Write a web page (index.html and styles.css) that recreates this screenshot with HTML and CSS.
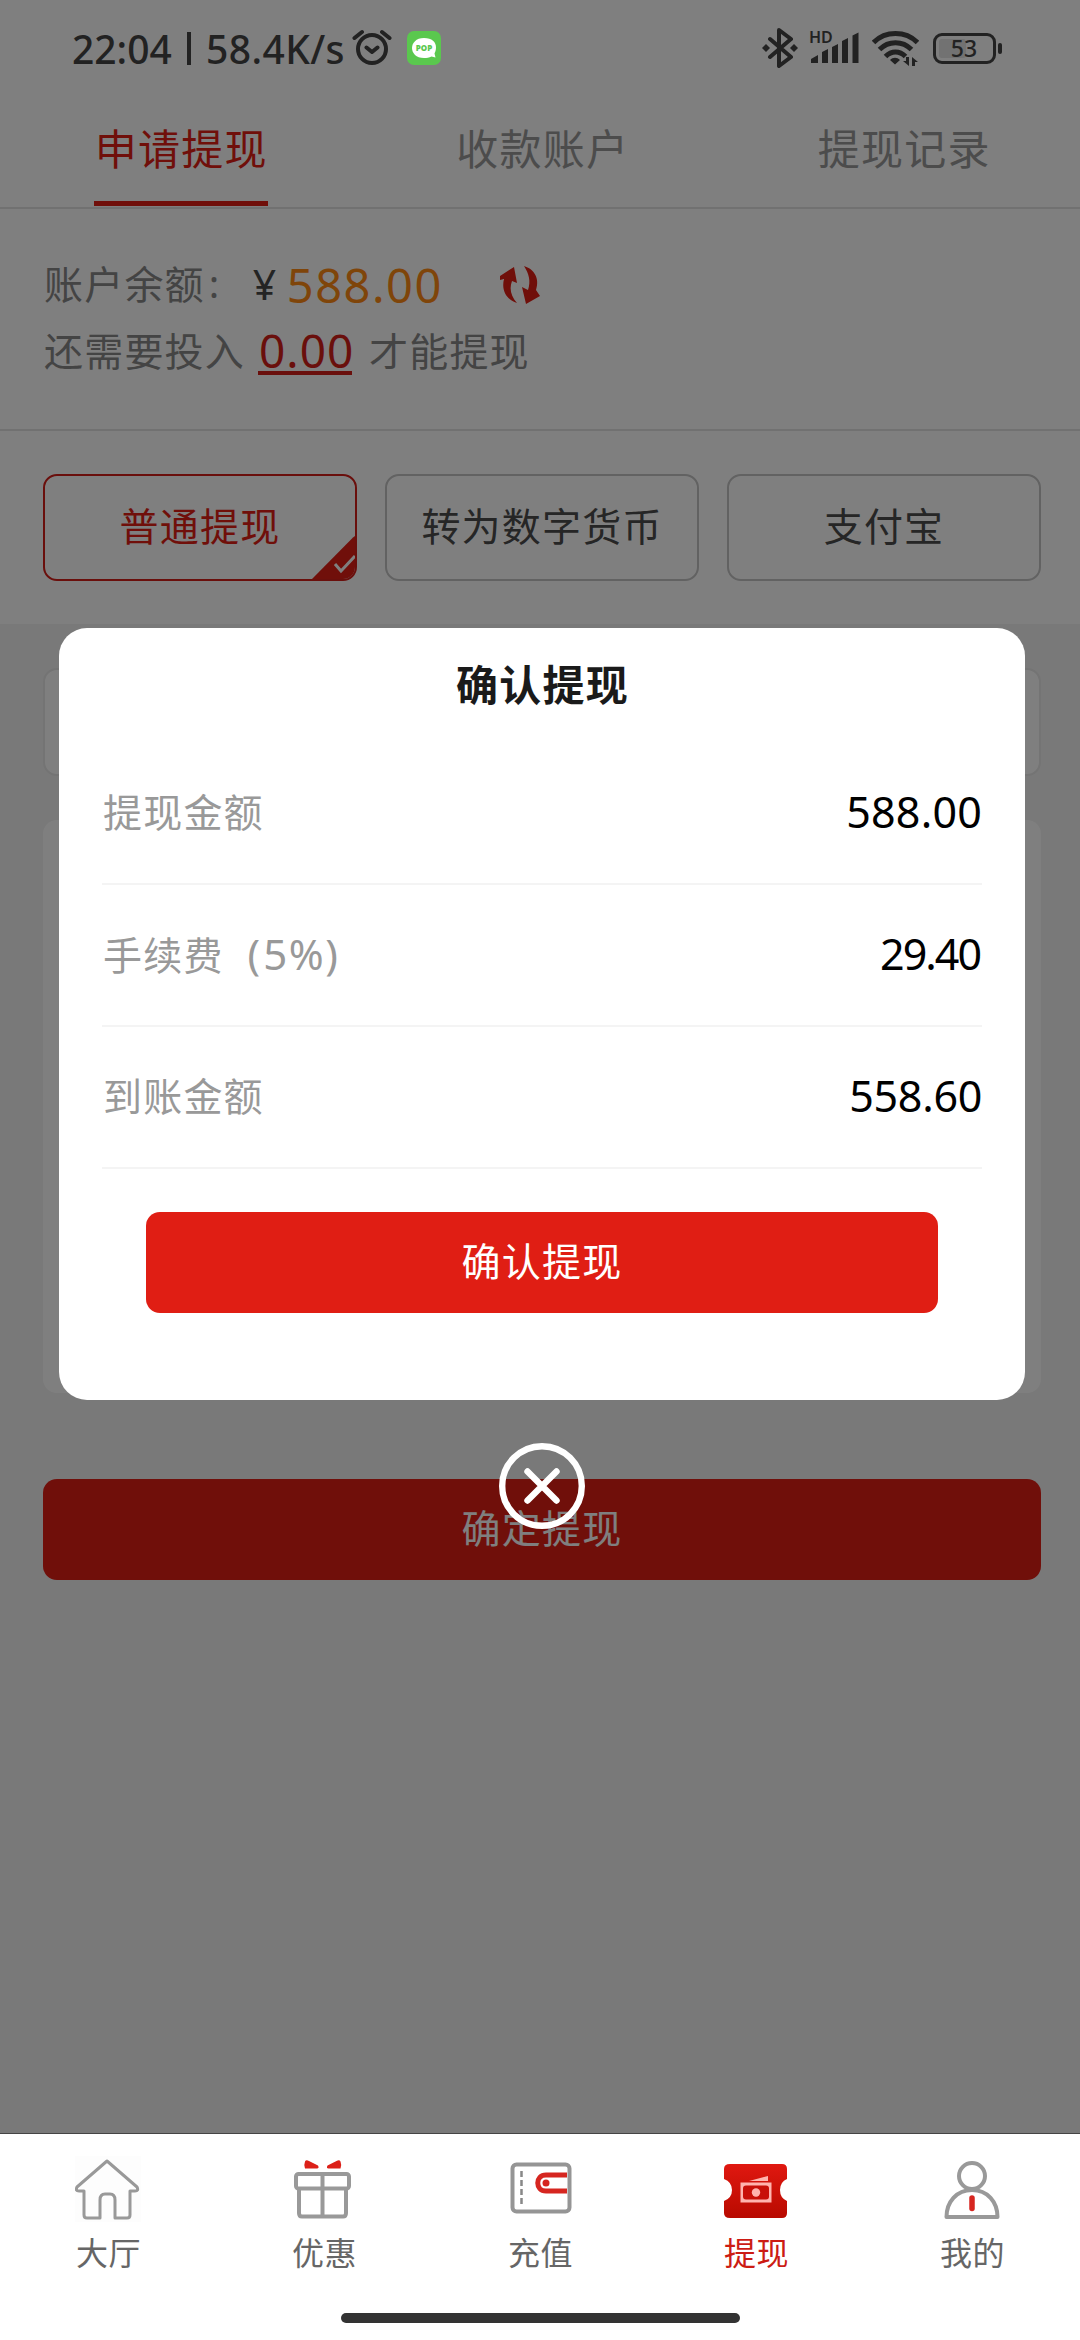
FILE: index.html
```html
<!DOCTYPE html>
<html lang="zh-CN">
<head>
<meta charset="utf-8">
<title>申请提现</title>
<link rel="stylesheet" href="styles.css">
</head>
<body>
<div class="app">
  <main class="page">
    <nav class="tabs">
      <div class="tab active"><span>申请提现</span></div>
      <div class="tab"><span>收款账户</span></div>
      <div class="tab"><span>提现记录</span></div>
    </nav>
    <section class="balance">
      <div class="line"><span class="label">账户余额</span><span class="colon">:</span><span class="yen">¥</span><span class="amount">588.00</span>
        <svg class="refresh" width="40" height="38" viewBox="0 0 40 38"><path d="M0 10 14 1l3 16-5-2c-3 8-1 15 5 22C7 34 1 25 4 13l-4 1z"/><path d="M24 0c10 3 16 12 12 24l4 6-14 8-4-17 6 3c3-9 1-16-4-24z"/></svg>
      </div>
      <div class="line"><span class="label">还需要投入</span><span class="need">0.00</span><span class="label">才能提现</span></div>
    </section>
    <section class="methods">
      <div class="method selected">普通提现
        <svg class="corner" width="43" height="43" viewBox="0 0 43 43"><path class="tri" d="M0 43 41 1.500 43 0v31a12 12 0 0 1-12 12z"/><path class="tick" d="m23 28 6 7 14-15"/></svg>
      </div>
      <div class="method">转为数字货币</div>
      <div class="method">支付宝</div>
    </section>
    <section class="form">
      <div class="field"></div>
      <div class="card"></div>
      <div class="submit">确定提现</div>
    </section>
  </main>

  <div class="overlay"></div>

  <header class="status">
    <span class="clock">22:04</span><span class="bar"></span><span class="speed">58.4K/s</span>
    <svg class="alarm" width="40" height="38" viewBox="0 0 40 38"><g fill="none" stroke="#222" stroke-linecap="round" stroke-linejoin="round"><circle cx="20" cy="20" r="14" stroke-width="4"/><path stroke-width="4" d="M14.500 18.500 20 23l5.500-4.500M2.500 9l7.500-6M37.500 9 30 3"/></g></svg>
    <svg class="pop" width="34" height="34" viewBox="0 0 34 34"><rect width="34" height="34" rx="7" fill="#5ac84e"/><path fill="#fff" d="M17 7c8 0 12 4 12 9.500 0 3-1 5-1.500 6l1 4-4-1C22 27 20 27 17 27 9 27 5 22 5 17S9 7 17 7z"/><text x="17" y="20" text-anchor="middle">POP</text></svg>
    <span class="spacer"></span>
    <svg class="bt" width="36" height="40" viewBox="0 0 36 40"><path fill="none" stroke="#222" stroke-width="4" stroke-linejoin="round" stroke-linecap="round" d="M8 11l21 18-12 9V2l12 9L8 29"/><path fill="#222" d="m0 20 4-4 4 4-4 4zM28 20l4-4 4 4-4 4z"/></svg>
    <svg class="signal" width="50" height="34" viewBox="0 0 50 34"><text x="0" y="12">HD</text><path fill="#222" d="M2 32v-4l7-4v8zM13 32V21l6-3v14zM23 32V16l6-3v19zM33 32V10l6-3v25zM43.500 32V4.500l6-3V32z"/></svg>
    <svg class="wifi" width="47" height="35" viewBox="0 0 47 35"><g fill="none" stroke="#222" stroke-width="5"><path d="M1.500 11.500c12-12 32-12 44 0M7.500 18.500c9-9 23-9 32 0M13.500 25.500c6-6 14-6 20 0"/></g><path fill="#222" d="M18 29c3-3 7-3 10 0l-5 4.500zM34 26h3v9l-6-5h3zM40 35v-9l6 5h-3v4z"/></svg>
    <svg class="battery" width="69" height="31" viewBox="0 0 69 31"><rect x="6" y="6" width="27" height="19" rx="3" fill="#727272"/><rect x="1.500" y="1.500" width="60" height="28" rx="7.500" fill="none" stroke="#222" stroke-width="3"/><rect x="65" y="10" width="4" height="11" rx="2" fill="#222"/><text x="31" y="24" text-anchor="middle">53</text></svg>
  </header>

  <div class="dialog">
    <h2>确认提现</h2>
    <div class="row"><span>提现金额</span><b>588.00</b></div>
    <div class="row"><span>手续费<i class="paren">(</i><i class="pct">5%)</i></span><b class="fee">29.40</b></div>
    <div class="row"><span>到账金额</span><b class="net">558.60</b></div>
    <div class="confirm">确认提现</div>
  </div>
  <svg class="close" width="86" height="86" viewBox="0 0 86 86"><g fill="none" stroke="#fff"><circle cx="43" cy="43" r="39.800" stroke-width="6.400"/><path stroke-width="6.400" stroke-linecap="round" d="m28.500 28.500 29 29m0-29-29 29"/></g></svg>

  <footer class="nav">
    <div class="items">
      <div class="item">
        <svg width="66" height="66" viewBox="0 0 66 66"><rect width="66" height="66" fill="#fdfdfd"/><path fill="none" stroke="#999" stroke-width="3" stroke-linejoin="round" d="M32 5 62 31q2 4-2 4h-5v24q0 3-3 3H40V44q0-6-5-6h-5q-5 0-5 6v18H12q-3 0-3-3V35H4q-4 0-2-4z"/></svg>
        <span>大厅</span>
      </div>
      <div class="item">
        <svg width="66" height="66" viewBox="0 0 66 66"><path fill="#dc2018" d="M14 5.500q1-2 4-.500l9 4.500q1.500 3-1 3H14q-1.500-3 0-7zM49.500 5.500q-1-2-4-.500l-9 4.500q-1.500 3 1 3h12q1.500-3 0-7z"/><g fill="none" stroke="#999" stroke-width="4"><rect x="5" y="18" width="53" height="14.500" rx="2.500"/><path d="M8 33v24q0 3.500 3 3.500h41q3 0 3-3.500V33M31.500 18v42"/></g></svg>
        <span>优惠</span>
      </div>
      <div class="item">
        <svg width="66" height="66" viewBox="0 0 66 66"><rect x="5.500" y="8.500" width="57" height="47" rx="4" fill="none" stroke="#959595" stroke-width="4"/><path stroke="#888" stroke-width="2.500" stroke-dasharray="6 3" d="M14.500 15v34"/><path fill="none" stroke="#d62620" stroke-width="5" d="M60 19H39c-11 0-11 16 0 16h21"/><circle cx="39" cy="27" r="3.500" fill="#d62620"/></svg>
        <span>充值</span>
      </div>
      <div class="item on">
        <svg width="66" height="66" viewBox="0 0 66 66"><defs><linearGradient id="g" x2="0" y2="1"><stop stop-color="#e01810"/><stop offset="1" stop-color="#b80a00"/></linearGradient></defs><path fill="url(#g)" d="M7 8h52q5 0 5 5v10q-7 3-7 11t7 11v12q0 5-5 5H7q-6 0-6-5V45q8-3 8-11T1 23V13q0-5 6-5z"/><path fill="#ffb4ae" d="m26 25 19-5v5zM17.500 26.500h31v20h-31z"/><rect x="20" y="29.500" width="26" height="14" rx="3" fill="#c81008"/><circle cx="33" cy="36.500" r="4.200" fill="#ffb4ae"/></svg>
        <span>提现</span>
      </div>
      <div class="item">
        <svg width="66" height="66" viewBox="0 0 66 66"><g fill="none" stroke="#999" stroke-width="4"><circle cx="33" cy="20" r="13"/><path stroke-linejoin="round" d="M7.500 61c0-15 10-27 25.500-27s25.500 12 25.500 27z"/></g><path stroke="#d62620" stroke-width="5.500" stroke-linecap="round" d="M33 42v10.500"/></svg>
        <span>我的</span>
      </div>
    </div>
    <div class="homebar"></div>
  </footer>
</div>
</body>
</html>
```
FILE: styles.css
```css
* { box-sizing: border-box; }
body {
  margin: 0;
  font-family: "Noto Sans", "Noto Sans CJK SC", sans-serif;
  background: #fff;
}
.app {
  position: relative;
  display: flex;
  flex-direction: column;
  width: 1080px;
  height: 2340px;
  overflow: hidden;
}
.page {
  flex: 1;
  display: flex;
  flex-direction: column;
  padding-top: 96px;
  background: #fff;
}

/* Top tabs */
.tabs {
  display: flex;
  height: 113px;
  border-bottom: 2px solid #e2e2e2;
}
.tab {
  flex: 0 0 361.5px;
  display: flex;
  justify-content: center;
  font-size: 42px;
  letter-spacing: 1.2px;
  line-height: 105px;
  color: #999;
}
.tab span { height: 110px; padding-left: 1px; }
.tab.active span {
  border-bottom: 5px solid #e01e14;
  color: #e01e14;
}

/* Balance summary */
.balance {
  height: 222px;
  padding: 42px 43px 0;
  border-bottom: 2px solid #e2e2e2;
}
.line {
  display: flex;
  align-items: center;
  height: 67px;
  font-size: 39px;
  letter-spacing: 1.2px;
  white-space: nowrap;
  color: #888;
}
.label { padding: 0 0 5px 1px; }
.colon { width: 48px; padding: 0 0 4px 4px; }
.yen { width: 34px; padding-bottom: 1px; font-size: 41px; color: #484848; }
.amount {
  width: 213px;
  font-size: 47px;
  letter-spacing: 1.5px;
  color: #ff8a14;
}
.refresh { fill: #e01e14; }
.need {
  width: 94px;
  height: 51px;
  margin: 0 16px 4px 13px;
  padding-left: 1px;
  border-bottom: 4px solid #d41e18;
  font-size: 46px;
  line-height: 53px;
  letter-spacing: 1px;
  color: #d41e18;
}

/* Withdrawal methods */
.methods {
  display: flex;
  gap: 28px;
  height: 193px;
  padding: 43px 39px 43px 43px;
}
.method {
  position: relative;
  flex: 1;
  height: 107px;
  border: 2px solid #c4c4c4;
  border-radius: 14px;
  font-size: 39px;
  letter-spacing: 1.2px;
  line-height: 100px;
  text-align: center;
  color: #4c4c4c;
}
.method.selected { border-color: #d41e18; color: #e01e14; }
.corner { position: absolute; right: 0; bottom: 0; }
.tri { fill: #e01e14; }
.tick { fill: none; stroke: #fff; stroke-width: 3; }

/* Form area */
.form {
  flex: 1;
  padding: 44px 39px 0 43px;
  background: #f2f2f2;
}
.field {
  height: 108px;
  margin-bottom: 44px;
  border: 2px solid #e8e8e8;
  border-radius: 14px;
  background: #fff;
}
.card {
  height: 573px;
  margin-bottom: 86px;
  border-radius: 14px;
  background: #fff;
}
.submit, .confirm {
  height: 101px;
  border-radius: 14px;
  background: #e01e14;
  color: #fff;
  font-size: 39px;
  letter-spacing: 1.2px;
  line-height: 97px;
  text-align: center;
}

.overlay {
  position: absolute;
  inset: 0;
  background: rgba(0, 0, 0, .5);
}

/* Phone status bar */
.status {
  position: absolute;
  inset: 0 0 auto;
  display: flex;
  align-items: center;
  height: 96px;
  padding: 0 78px 0 72px;
  font-size: 39px;
  font-weight: 500;
  color: #222;
}
.clock { width: 115px; }
.bar { width: 4px; height: 33px; margin-right: 15px; background: #222; }
.speed { width: 146px; letter-spacing: .4px; }
.pop { margin-left: 15px; }
.pop text { font: 800 8px "Open Sans", sans-serif; fill: #5ac84e; }
.spacer { flex: 1; }
.signal { margin-left: 11px; overflow: visible; }
.signal text { font: 600 16px "Noto Sans", sans-serif; fill: #222; }
.wifi { margin-left: 13px; }
.battery { margin-left: 14px; }
.battery text { font: 500 23px "Noto Sans", sans-serif; fill: #222; }

/* Confirmation dialog */
.dialog {
  position: absolute;
  left: 59px;
  top: 628px;
  width: 966px;
  height: 772px;
  padding: 0 43px;
  border-radius: 28px;
  background: #fff;
}
.dialog h2 {
  height: 115px;
  margin: 0;
  padding-left: 1px;
  font-size: 42px;
  font-weight: 600;
  letter-spacing: 1.2px;
  line-height: 113px;
  text-align: center;
  color: #1a1a1a;
}
.row {
  display: flex;
  justify-content: space-between;
  height: 142px;
  padding-left: 1px;
  border-bottom: 2px solid #f4f4f4;
  font-size: 39px;
  letter-spacing: 1.2px;
  line-height: 138px;
  color: #999;
}
.row b {
  font-size: 43px;
  font-weight: 400;
  letter-spacing: .2px;
  color: #000;
}
.row b.fee { letter-spacing: -2px; padding-right: 2px; }
.row b.net { letter-spacing: -.3px; }
.row i { font-style: normal; font-size: 42px; letter-spacing: 0; }
.row .paren { margin: 0 3px 0 24px; }
.row .pct { letter-spacing: 1.5px; }
.confirm { margin: 43px 44px 0; }
.close { position: absolute; left: 499px; top: 1443px; }

/* Bottom navigation */
.nav {
  position: relative;
  display: flex;
  flex-direction: column;
  align-items: center;
  height: 207px;
  border-top: 1px solid #444;
  background: #fff;
}
.items { display: flex; width: 1080px; height: 179px; }
.item {
  flex: 1;
  display: flex;
  flex-direction: column;
  align-items: center;
  padding-top: 22px;
  font-size: 32px;
  line-height: 56px;
  letter-spacing: .5px;
  color: #666;
}
.item span { padding: 3px 0 0 1px; }
.item.on { color: #cc1c14; }
.homebar { width: 399px; height: 10px; border-radius: 5px; background: #333; }
```
